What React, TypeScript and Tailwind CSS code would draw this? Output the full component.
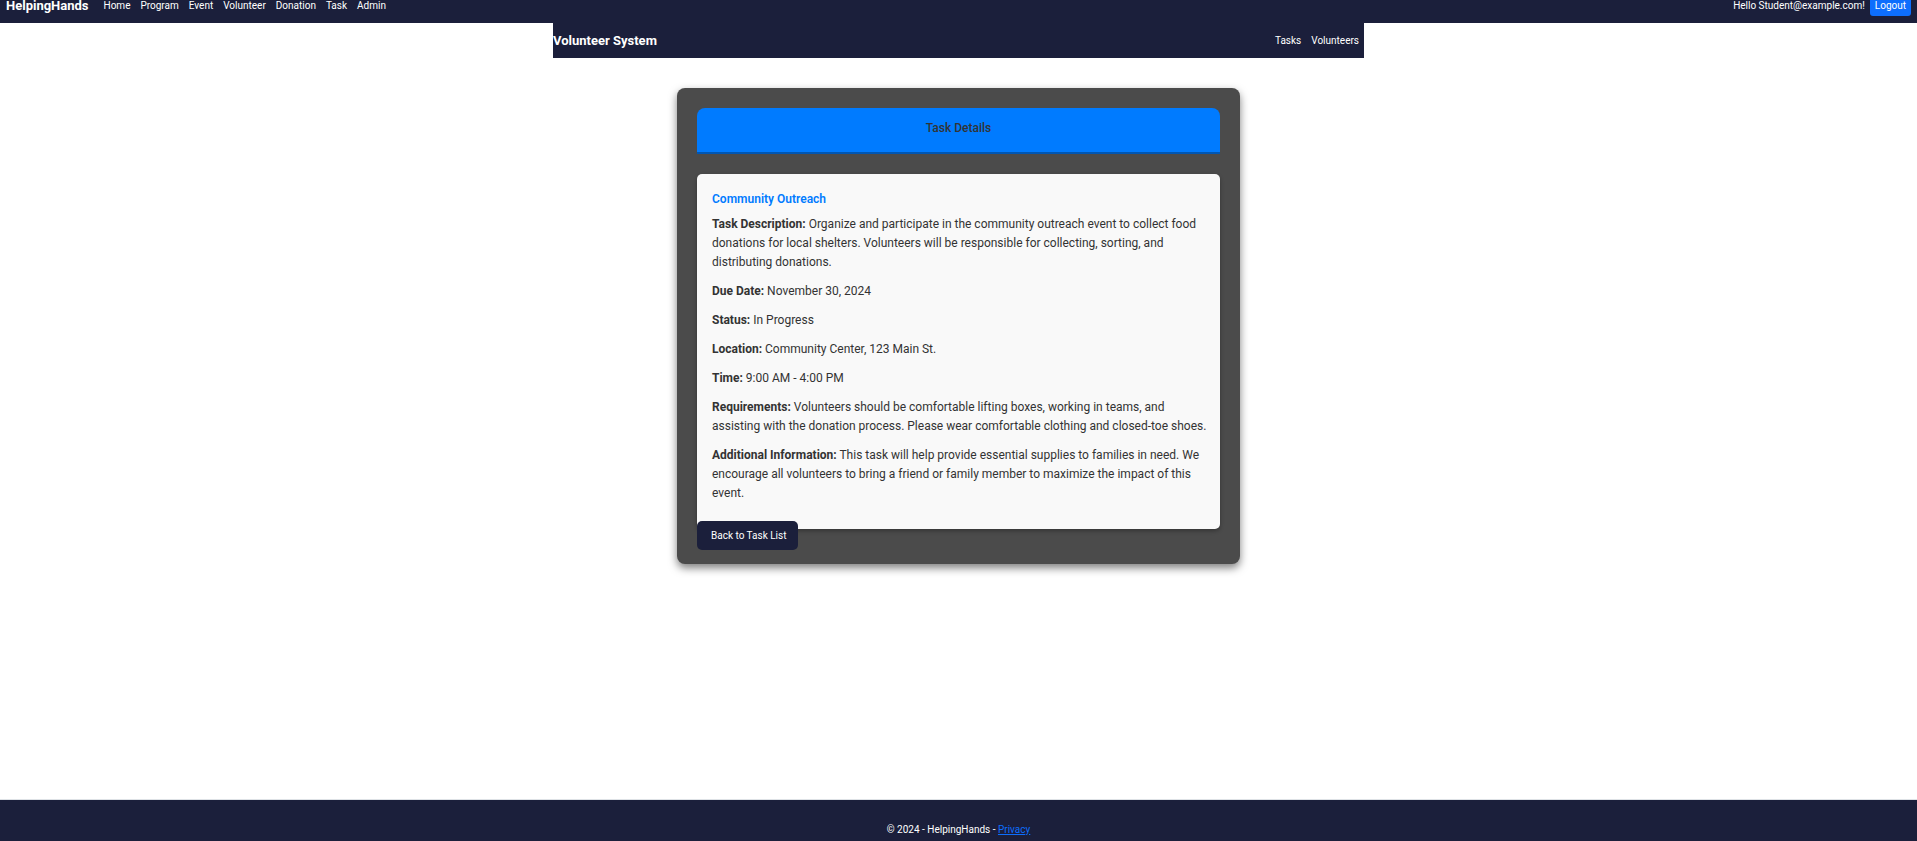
const mainLinks = ['Home', 'Program', 'Event', 'Volunteer', 'Donation', 'Task', 'Admin'];
const volunteerLinks = ['Tasks', 'Volunteers'];

const details = [
  {
    label: 'Task Description:',
    text: 'Organize and participate in the community outreach event to collect food donations for local shelters. Volunteers will be responsible for collecting, sorting, and distributing donations.',
  },
  { label: 'Due Date:', text: 'November 30, 2024' },
  { label: 'Status:', text: 'In Progress' },
  { label: 'Location:', text: 'Community Center, 123 Main St.' },
  { label: 'Time:', text: '9:00 AM - 4:00 PM' },
  {
    label: 'Requirements:',
    text: 'Volunteers should be comfortable lifting boxes, working in teams, and assisting with the donation process. Please wear comfortable clothing and closed-toe shoes.',
  },
  {
    label: 'Additional Information:',
    text: 'This task will help provide essential supplies to families in need. We encourage all volunteers to bring a friend or family member to maximize the impact of this event.',
  },
];

function SiteHeader() {
  return (
    <header className="flex h-[23px] items-end justify-between overflow-hidden bg-[#1b1f3b] px-[6px] pb-[7px] text-white">
      <nav className="flex h-5 items-center" aria-label="Main">
        <a href="#" className="mr-[15px] text-[13px] leading-3 font-bold">
          HelpingHands
        </a>
        <ul className="flex gap-[10px] text-[10px] leading-3">
          {mainLinks.map((link) => (
            <li key={link}>
              <a href="#">{link}</a>
            </li>
          ))}
        </ul>
      </nav>
      <div className="flex items-center gap-[5px] text-[10px] leading-3">
        <span>Hello Student@example.com!</span>
        <button type="button" className="rounded-[3px] bg-[#0d6efd] px-[5px] py-1">
          Logout
        </button>
      </div>
    </header>
  );
}

function VolunteerHeader() {
  return (
    <nav
      aria-label="Volunteer system"
      className="mx-auto flex h-[35px] w-full max-w-[811px] items-center justify-between bg-[#1b1f3b] pr-[5px] text-white"
    >
      <a href="#" className="text-[13px] font-bold">
        Volunteer System
      </a>
      <ul className="flex gap-[10px] text-[10px]">
        {volunteerLinks.map((link) => (
          <li key={link}>
            <a href="#">{link}</a>
          </li>
        ))}
      </ul>
    </nav>
  );
}

function TaskDetails() {
  return (
    <section className="mx-auto mt-[30px] w-full max-w-[563px] rounded-lg bg-[#4b4b4b] px-5 pt-5 pb-[14px] text-[#333] shadow-[0_4px_8px_rgba(0,0,0,0.5)]">
      <h1 className="mb-5 rounded-t-lg border-b-2 border-[#0056b3] bg-[#007bff] pt-[10px] pb-[14px] text-center text-[12px] leading-5 font-medium">
        Task Details
      </h1>
      <article className="rounded-[5px] bg-[#f9f9f9] pt-[15px] pr-2 pb-[26px] pl-[15px] text-[12px] shadow-[0_2px_4px_rgba(0,0,0,0.3)]">
        <h2 className="mb-[6px] leading-5 font-semibold text-[#007bff]">Community Outreach</h2>
        <div className="flex flex-col gap-[10px] leading-[19px]">
          {details.map(({ label, text }) => (
            <p key={label}>
              <strong>{label}</strong> {text}
            </p>
          ))}
        </div>
      </article>
      <a
        href="#"
        className="relative -mt-2 block w-fit rounded-[5px] bg-[#1b1f3b] pr-3 pl-[14px] text-[10px] leading-[29px] text-white"
      >
        Back to Task List
      </a>
    </section>
  );
}

export default function App() {
  return (
    <div className="flex min-h-screen flex-col bg-white font-['Roboto','Open_Sans',sans-serif]">
      <SiteHeader />
      <VolunteerHeader />
      <main className="grow">
        <TaskDetails />
      </main>
      <footer className="border-t border-[#dee2e6] bg-[#1b1f3b] pt-5 pb-[1px] text-center text-[10px] leading-5 text-white">
        © 2024 - HelpingHands -{' '}
        <a href="#" className="text-[#0d6efd] underline">
          Privacy
        </a>
      </footer>
    </div>
  );
}
